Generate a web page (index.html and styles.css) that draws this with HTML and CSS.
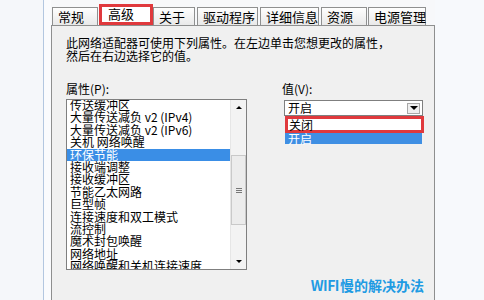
FILE: index.html
```html
<!DOCTYPE html>
<html lang="zh-CN">
<head>
<meta charset="utf-8">
<title>网络适配器属性 - 高级</title>
<link rel="stylesheet" href="styles.css">
</head>
<body>
<div class="screen">
  <div class="gutter"></div>
  <div class="rule-blue"></div>
  <div class="gap"></div>
  <div class="dialog">
    <div class="tabs">
      <div class="tab w-changgui">常规</div>
      <div class="tab sel">高级</div>
      <div class="tab w-guanyu">关于</div>
      <div class="tab w-qudong">驱动程序</div>
      <div class="tab w-xiangxi">详细信息</div>
      <div class="tab w-ziyuan">资源</div>
      <div class="tab w-dianyuan">电源管理</div>
    </div>
    <div class="panel">
      <p class="desc">此网络适配器可使用下列属性。在左边单击您想更改的属性，<br>然后在右边选择它的值。</p>
      <div class="cols">
        <div class="col-left">
          <div class="label">属性(P):</div>
          <div class="listbox">
            <ul class="items">
              <li>传送缓冲区</li>
              <li>大量传送减负 v2 (IPv4)</li>
              <li>大量传送减负 v2 (IPv6)</li>
              <li>关机 网络唤醒</li>
              <li class="selected">环保节能</li>
              <li>接收端调整</li>
              <li>接收缓冲区</li>
              <li>节能乙太网路</li>
              <li>巨型帧</li>
              <li>连接速度和双工模式</li>
              <li>流控制</li>
              <li>魔术封包唤醒</li>
              <li>网络地址</li>
              <li>网络唤醒和关机连接速度</li>
            </ul>
            <div class="scrollbar">
              <div class="sb-btn"><span class="tri-up"></span></div>
              <div class="sb-track"><div class="sb-thumb"><span class="grip"></span></div></div>
              <div class="sb-btn"><span class="tri-down"></span></div>
            </div>
          </div>
        </div>
        <div class="col-right">
          <div class="label label-v">值(V):</div>
          <div class="combo">
            <span class="combo-text">开启</span>
            <span class="combo-btn"><span class="tri-down"></span></span>
          </div>
          <div class="droplist">
            <div class="opt opt-marked">关闭</div>
            <div class="opt opt-sel">开启</div>
          </div>
        </div>
      </div>
      <div class="watermark"><span class="wm-latin">WIFI</span>慢的解决办法</div>
    </div>
  </div>
  <div class="right-area"></div>
</div>
</body>
</html>
```
FILE: styles.css
```css
html, body {
  margin: 0;
  padding: 0;
}
body {
  background: #f6f8fb;
  font-family: "Noto Sans CJK SC", "Liberation Sans", sans-serif;
  color: #000;
}
.screen {
  display: flex;
  width: 484px;
  height: 300px;
  overflow: hidden;
}
.gutter {
  width: 43px;
  background: #f5f7fa;
}
.rule-blue {
  width: 1px;
  background: #b3c7e0;
}
.gap {
  width: 7px;
  background: #fafbfd;
}
.dialog {
  width: 384px;
  display: flex;
  flex-direction: column;
}
.right-area {
  flex: 1;
  background: #f7f9fc;
}
.tabs {
  height: 25px;
  display: flex;
  align-items: flex-end;
  padding-left: 1px;
  background: #f7f8fa;
}
.tab {
  box-sizing: border-box;
  height: 18px;
  border: 1px solid #8f9090;
  border-bottom: none;
  background: linear-gradient(#fefefe, #e9e9e9);
  font-size: 13px;
  line-height: 16px;
  padding: 1px 0 0 5px;
  white-space: nowrap;
  margin-right: 1px;
}
.w-changgui { width: 46px; }
.w-guanyu { width: 42px; margin-right: 2px; }
.w-qudong { width: 61px; margin-right: 2px; }
.w-xiangxi { width: 59px; margin-right: 2px; }
.w-ziyuan { width: 46px; margin-right: 1px; }
.w-dianyuan { width: 58px; }
.tab.sel {
  width: 54px;
  height: 21px;
  border: 3px solid #e0393d;
  background: #ffffff;
  padding: 0 0 0 6px;
  line-height: 14px;
  margin-right: 0;
}
.panel {
  flex: 1;
  position: relative;
  background: #f0f0f0;
  border: 1px solid #8e8f8f;
  border-bottom: none;
  padding: 10px 0 0 14px;
}
.desc {
  margin: 0;
  font-size: 12px;
  line-height: 13px;
  white-space: nowrap;
}
.cols {
  display: flex;
  gap: 35px;
  margin-top: 20px;
}
.col-left {
  width: 181px;
}
.col-right {
  width: 142px;
}
.label {
  font-size: 12px;
  line-height: 14px;
  height: 14px;
  margin-bottom: 3px;
}
.label-v {
  margin-bottom: 4px;
}
.listbox {
  box-sizing: border-box;
  width: 181px;
  height: 171px;
  border: 1px solid #7f7f7f;
  background: #ffffff;
  display: flex;
  overflow: hidden;
}
.items {
  flex: 1;
  list-style: none;
  margin: -1px 0 0 0;
  padding: 0;
}
.items li {
  height: 12.4px;
  font-size: 12px;
  line-height: 12.4px;
  padding-left: 3px;
  white-space: nowrap;
}
.items li.selected {
  background: #3a8ee6;
  color: #ffffff;
}
.scrollbar {
  width: 15px;
  display: flex;
  flex-direction: column;
  background: #f3f3f3;
  border-left: 1px solid #e6e6e6;
}
.sb-btn {
  height: 15px;
  display: flex;
  align-items: center;
  justify-content: center;
}
.sb-track {
  flex: 1;
}
.sb-thumb {
  box-sizing: border-box;
  margin-top: 40px;
  height: 70px;
  border: 1px solid #c9c9c9;
  background: #ececec;
  display: flex;
  align-items: center;
  justify-content: center;
}
.grip {
  width: 6px;
  height: 5px;
  border-top: 1px solid #777;
  border-bottom: 1px solid #777;
  box-sizing: border-box;
  position: relative;
}
.grip::after {
  content: "";
  position: absolute;
  left: 0;
  right: 0;
  top: 1px;
  height: 1px;
  background: #777;
}
.tri-up {
  width: 0;
  height: 0;
  border-left: 3px solid transparent;
  border-right: 3px solid transparent;
  border-bottom: 3px solid #000;
}
.tri-down {
  width: 0;
  height: 0;
  border-left: 3px solid transparent;
  border-right: 3px solid transparent;
  border-top: 3px solid #000;
}
.combo {
  box-sizing: border-box;
  margin-left: 2px;
  width: 139px;
  height: 16px;
  border: 1px solid #7f7f7f;
  background: #ffffff;
  display: flex;
  align-items: center;
  justify-content: space-between;
}
.combo-text {
  font-size: 12px;
  line-height: 14px;
  padding-left: 3px;
}
.combo-btn {
  box-sizing: border-box;
  width: 13px;
  height: 11px;
  margin-right: 2px;
  border: 1px solid #a8a8a8;
  background: #efefef;
  display: flex;
  align-items: center;
  justify-content: center;
}
.combo-btn .tri-down {
  border-left-width: 4px;
  border-right-width: 4px;
  border-top-width: 4px;
}
.droplist {
  margin-left: 3px;
  width: 137px;
}
.opt {
  font-size: 12px;
  white-space: nowrap;
}
.opt-marked {
  box-sizing: border-box;
  width: 139px;
  height: 17px;
  line-height: 11px;
  border: 3px solid #e0393d;
  background: #ffffff;
  padding-left: 1px;
}
.opt-sel {
  height: 11px;
  line-height: 11px;
  background: #3f8fe3;
  color: #ffffff;
  padding-left: 3px;
}
.watermark {
  position: absolute;
  right: 10px;
  bottom: 6px;
  font-size: 14px;
  line-height: 18px;
  font-weight: bold;
  color: #1f9be3;
  white-space: nowrap;
}
.wm-latin {
  letter-spacing: -0.5px;
  margin-right: 1px;
}
```
